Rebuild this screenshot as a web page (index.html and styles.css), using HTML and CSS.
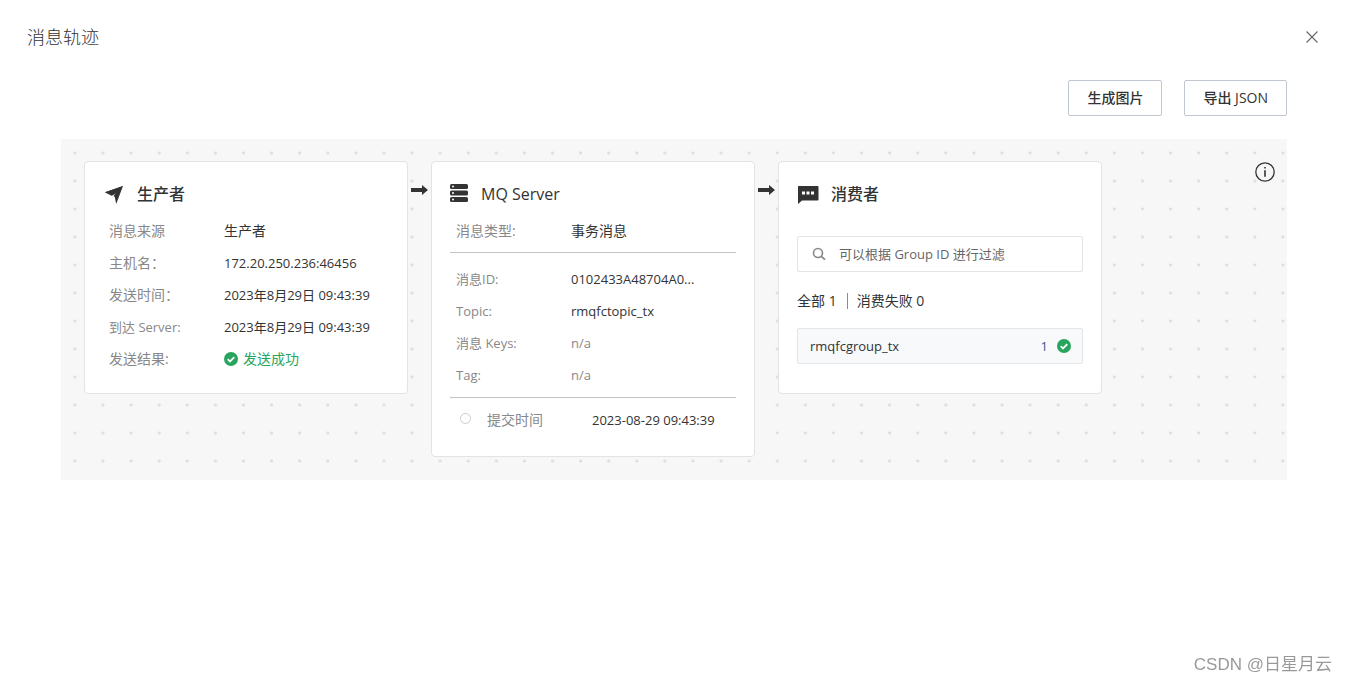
FILE: index.html
```html
<!DOCTYPE html>
<html lang="zh-CN">
<head>
<meta charset="utf-8">
<meta name="viewport" content="width=device-width, initial-scale=1">
<title>消息轨迹</title>
<link rel="stylesheet" href="styles.css">
</head>
<body>
<svg class="sprite" aria-hidden="true">
  <symbol id="check" viewBox="0 0 14 14">
    <circle cx="7" cy="7" r="7" fill="#27a55c"/>
    <path d="M3.7 7.1l2.3 2.3 4.3-4.2" fill="none" stroke="#fff" stroke-width="1.8"/>
  </symbol>
  <symbol id="arrow" viewBox="0 0 17 10">
    <path d="M0 3h11V0l6 5-6 5V7H0z" fill="#333"/>
  </symbol>
</svg>

<header class="drawer-header">
  <h1 class="drawer-title">消息轨迹</h1>
  <button class="close" type="button" aria-label="关闭">
    <svg width="12" height="12" viewBox="0 0 12 12"><path d="M.5.5l11 11M11.5.5l-11 11" fill="none" stroke="#666" stroke-width="1.1"/></svg>
  </button>
</header>

<main class="drawer-body">
  <div class="toolbar">
    <button class="btn" type="button">生成图片</button>
    <button class="btn" type="button">导出 JSON</button>
  </div>

  <div class="canvas">
    <section class="card">
      <h2 class="card-title">
        <svg class="card-icon" width="22" height="20" viewBox="0 0 22 20"><path d="M2 8.2L20 2 13.200 20l-1.500-7.300z" fill="#333"/><path d="M8.800 14.700l-.3-2.700 5-4.400-3.200 5z" fill="#fff"/><path d="M2 8.200L20 2l-8.300 8.100-3 1.600z" fill="#333"/></svg>
        生产者
      </h2>
      <dl class="rows">
        <div class="row cjk"><dt>消息来源</dt><dd>生产者</dd></div>
        <div class="row"><dt class="cjk">主机名：</dt><dd>172.20.250.236:46456</dd></div>
        <div class="row"><dt class="cjk">发送时间：</dt><dd>2023年8月29日 09:43:39</dd></div>
        <div class="row"><dt>到达 Server:</dt><dd>2023年8月29日 09:43:39</dd></div>
        <div class="row cjk"><dt>发送结果:</dt><dd class="success"><svg width="14" height="14"><use href="#check"/></svg>发送成功</dd></div>
      </dl>
    </section>

    <svg class="arrow" width="17" height="10" aria-hidden="true"><use href="#arrow"/></svg>

    <section class="card server">
      <h2 class="card-title">
        <svg class="card-icon" width="19" height="20" viewBox="0 0 19 20"><g fill="#333"><rect x="0" y="0" width="18" height="5" rx="1.500"/><rect x="0" y="6.500" width="18" height="5" rx="1.500"/><rect x="0" y="13" width="18" height="5" rx="1.500"/></g><g fill="#fff"><circle cx="3" cy="2.500" r="1"/><circle cx="3" cy="9" r="1"/><circle cx="3" cy="15.500" r="1"/></g></svg>
        MQ Server
      </h2>
      <dl class="rows">
        <div class="row cjk"><dt>消息类型:</dt><dd>事务消息</dd></div>
      </dl>
      <dl class="rows divided">
        <div class="row"><dt>消息ID:</dt><dd>0102433A48704A0...</dd></div>
        <div class="row"><dt>Topic:</dt><dd>rmqfctopic_tx</dd></div>
        <div class="row"><dt>消息 Keys:</dt><dd class="muted">n/a</dd></div>
        <div class="row"><dt>Tag:</dt><dd class="muted">n/a</dd></div>
      </dl>
      <dl class="rows divided timeline">
        <div class="row"><dt class="cjk">提交时间</dt><dd>2023-08-29 09:43:39</dd></div>
      </dl>
    </section>

    <svg class="arrow" width="17" height="10" aria-hidden="true"><use href="#arrow"/></svg>

    <section class="card consumer">
      <h2 class="card-title">
        <svg class="card-icon" width="22" height="20" viewBox="0 0 22 20"><path d="M1.500 2h19a1 1 0 0 1 1 1v12.500a1 1 0 0 1-1 1H5L1 20V2.500z" fill="#333"/><path d="M5 7.500h3v3H5zM9.500 7.500h3v3h-3zM14 7.500h3v3h-3z" fill="#fff"/></svg>
        消费者
      </h2>
      <label class="search">
        <svg width="14" height="14" viewBox="0 0 14 14" aria-hidden="true"><circle cx="6" cy="6" r="4.500" fill="none" stroke="#888" stroke-width="1.600"/><path d="M9.300 9.300l3.700 3.400" stroke="#888" stroke-width="1.800"/></svg>
        <input type="text" aria-label="Group ID" placeholder="可以根据 Group ID 进行过滤">
      </label>
      <div class="tabs cjk">
        <button type="button">全部 1</button>
        <button type="button">消费失败 0</button>
      </div>
      <button class="group" type="button">
        <span class="group-name">rmqfcgroup_tx</span>
        <span class="group-count">1</span>
        <svg width="14" height="14"><use href="#check"/></svg>
      </button>
    </section>

    <button class="info" type="button" aria-label="说明">
      <svg width="20" height="20" viewBox="0 0 20 20"><circle cx="10" cy="10" r="9.200" fill="none" stroke="#333" stroke-width="1.300"/><path d="M9.200 5h1.600v1.600H9.200zM9.200 8.200h1.600v6.600H9.200z" fill="#333"/></svg>
    </button>
  </div>
</main>

<div class="watermark">CSDN @日星月云</div>
</body>
</html>
```
FILE: styles.css
```css
* { box-sizing: border-box; }

body {
  margin: 0;
  background: #fff;
  color: #333;
  font: 13px/20px "Open Sans", "Noto Sans", "Noto Sans CJK SC", sans-serif;
}

button {
  padding: 0;
  border: 0;
  background: none;
  color: inherit;
  font: inherit;
  cursor: pointer;
}

svg { display: block; flex: none; }
.sprite { display: none; }
.cjk { font-size: 14px; }

.drawer-header {
  display: flex;
  justify-content: space-between;
  align-items: center;
  height: 74px;
  padding: 0 29px 0 27px;
}

.drawer-title {
  margin: 0;
  font-size: 18px;
  font-weight: 300;
}

.drawer-body { padding: 6px 60px 0 61px; }

.toolbar {
  display: flex;
  justify-content: flex-end;
  gap: 22px;
  margin-bottom: 23px;
}

.btn {
  height: 36px;
  padding: 0 18px;
  border: 1px solid #c1c7d0;
  border-radius: 2px;
  font-size: 14px;
  font-weight: 500;
}

.canvas {
  position: relative;
  display: flex;
  align-items: flex-start;
  padding: 22px 23px 23px;
  background: #f7f7f7 radial-gradient(circle at 19px 20px, #dedede 1px, transparent 2px) content-box 0 0 / 28px 28px round repeat;
  background-clip: border-box;
}

.card {
  flex: 0 1 324px;
  min-width: 0;
  padding: 16px 18px 18px;
  border: 1px solid #e3e3e3;
  border-radius: 4px;
  background: #fff;
}

.card-title {
  display: flex;
  align-items: center;
  gap: 12px;
  height: 32px;
  margin: 0 0 5px;
  font-size: 16px;
  font-weight: 500;
}

.arrow { margin: 24px 3px 0; }

.rows { margin: 0; padding: 0 6px; }

.row {
  display: flex;
  align-items: center;
  height: 32px;
}

.row dt {
  flex: 0 0 115px;
  color: #888;
}

.row dd {
  display: flex;
  align-items: center;
  gap: 5px;
  margin: 0;
  white-space: nowrap;
}

.row .muted { color: #888; }
.row .success { color: #27a55c; }

.server { padding-bottom: 20px; }

.divided {
  margin-top: 5px;
  padding-top: 10px;
  border-top: 1px solid #c1c4c9;
}

.timeline {
  margin-top: 6px;
  padding-top: 6px;
}

.timeline .row::before {
  content: "";
  width: 9px;
  height: 9px;
  margin: 0 16px 4px 4px;
  border: 1px solid #ccc;
  border-radius: 50%;
}

.timeline dt { flex-basis: 105px; }

.consumer { padding-bottom: 29px; }

.search {
  display: flex;
  align-items: center;
  gap: 13px;
  height: 36px;
  margin-top: 26px;
  padding: 0 14px;
  border: 1px solid #e3e3e3;
  border-radius: 2px;
}

.search input {
  flex: 1;
  min-width: 0;
  padding: 0;
  border: 0;
  outline: 0;
  background: none;
  color: inherit;
  font: inherit;
}

.search input::placeholder { color: #666; }

.tabs {
  display: flex;
  align-items: center;
  height: 20px;
  margin: 19px 0 17px;
}

.tabs button + button {
  height: 16px;
  margin-left: 10px;
  padding-left: 9px;
  border-left: 1px solid #4a9be0;
  line-height: 16px;
}

.group {
  display: flex;
  align-items: center;
  width: 100%;
  height: 36px;
  padding: 0 11px 0 12px;
  border: 1px solid #e3e6e9;
  border-radius: 2px;
  background: #f7f9fb;
}

.group-name { flex: 1; text-align: left; }
.group-count { margin-right: 9px; color: #345c8c; }

.info {
  position: absolute;
  top: 23px;
  right: 12px;
}

.watermark {
  position: fixed;
  right: 15px;
  bottom: 5px;
  color: #999;
  font: 17px/24px "Liberation Sans", "Noto Sans CJK SC", sans-serif;
}
```
